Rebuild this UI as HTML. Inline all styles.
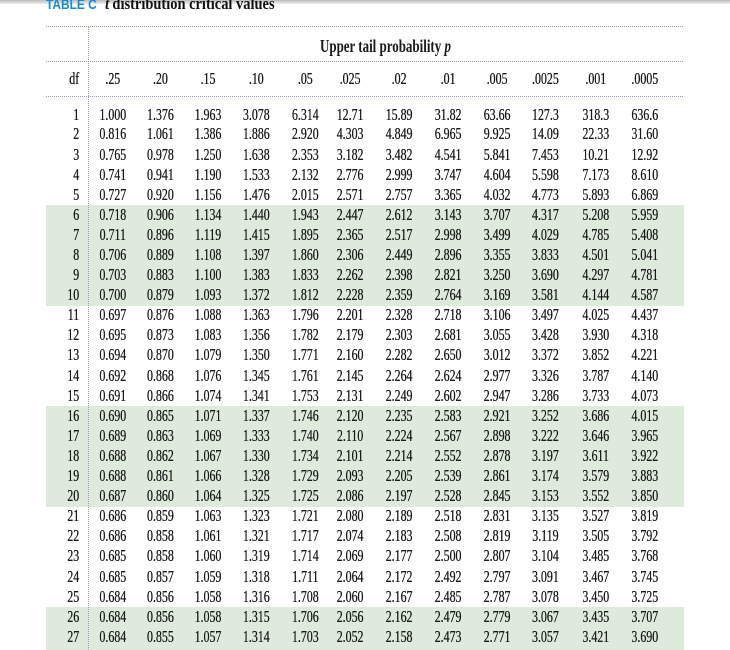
<!DOCTYPE html>
<html><head><style>
body{margin:0;width:730px;height:650px;overflow:hidden;background:#fff;position:relative;font-family:"Liberation Serif",serif;color:#1a1a1a;}
.top{position:absolute;left:0;top:0;width:730px;height:4px;background:linear-gradient(#bbb,#eee);}
.title{position:absolute;left:46px;top:-6px;font-family:"Liberation Sans",sans-serif;font-weight:bold;font-size:14px;color:#1b8bc6;transform:scaleX(0.85);transform-origin:left;white-space:nowrap;}
.title i{font-family:"Liberation Serif",serif;color:#111;font-size:17px;margin-left:6px;}
.title b{font-family:"Liberation Serif",serif;color:#111;font-size:17px;}
.hl{position:absolute;left:46px;width:637px;height:0;border-top:1.5px dotted #9a9ac8;}
.vl{position:absolute;left:88px;top:27px;height:623px;border-left:1.5px dotted #9a9ac8;}
.band{position:absolute;left:46px;width:638px;background:#deebdc;}
.r{position:absolute;left:0;width:1043px;height:20px;transform:scaleX(0.7);transform-origin:0 0;font-size:17px;line-height:20px;text-shadow:0.3px 0 0 #1a1a1a;}
.r span{position:absolute;transform:translateX(-50%);white-space:nowrap;}
.r span:nth-child(1){left:113px;transform:translateX(-100%);}
.r span:nth-child(2){left:161px}.r span:nth-child(3){left:229px}.r span:nth-child(4){left:297px}
.r span:nth-child(5){left:366px}.r span:nth-child(6){left:436px}.r span:nth-child(7){left:500px}
.r span:nth-child(8){left:570px}.r span:nth-child(9){left:640px}.r span:nth-child(10){left:710px}
.r span:nth-child(11){left:779px}.r span:nth-child(12){left:851px}.r span:nth-child(13){left:921px}
.up{position:absolute;left:320px;top:36px;font-size:18px;font-weight:bold;transform:scaleX(0.72);transform-origin:left;white-space:nowrap;}
</style></head><body>
<div class="top"></div>
<div class="title">TABLE C <i>t</i> <b>distribution critical values</b></div>
<div class="band" style="top:205px;height:101px"></div>
<div class="band" style="top:406px;height:101px"></div>
<div class="band" style="top:607px;height:43px"></div>
<div class="hl" style="top:26px"></div>
<div class="hl" style="top:61px"></div>
<div class="hl" style="top:96px"></div>
<div class="vl"></div>
<div class="up">Upper tail probability <i>p</i></div>
<div class="r" style="top:69px"><span>df</span><span>.25</span><span>.20</span><span>.15</span><span>.10</span><span>.05</span><span>.025</span><span>.02</span><span>.01</span><span>.005</span><span>.0025</span><span>.001</span><span>.0005</span></div>
<div class="r" style="top:105px"><span>1</span><span>1.000</span><span>1.376</span><span>1.963</span><span>3.078</span><span>6.314</span><span>12.71</span><span>15.89</span><span>31.82</span><span>63.66</span><span>127.3</span><span>318.3</span><span>636.6</span></div>
<div class="r" style="top:124px"><span>2</span><span>0.816</span><span>1.061</span><span>1.386</span><span>1.886</span><span>2.920</span><span>4.303</span><span>4.849</span><span>6.965</span><span>9.925</span><span>14.09</span><span>22.33</span><span>31.60</span></div>
<div class="r" style="top:145px"><span>3</span><span>0.765</span><span>0.978</span><span>1.250</span><span>1.638</span><span>2.353</span><span>3.182</span><span>3.482</span><span>4.541</span><span>5.841</span><span>7.453</span><span>10.21</span><span>12.92</span></div>
<div class="r" style="top:165px"><span>4</span><span>0.741</span><span>0.941</span><span>1.190</span><span>1.533</span><span>2.132</span><span>2.776</span><span>2.999</span><span>3.747</span><span>4.604</span><span>5.598</span><span>7.173</span><span>8.610</span></div>
<div class="r" style="top:185px"><span>5</span><span>0.727</span><span>0.920</span><span>1.156</span><span>1.476</span><span>2.015</span><span>2.571</span><span>2.757</span><span>3.365</span><span>4.032</span><span>4.773</span><span>5.893</span><span>6.869</span></div>
<div class="r" style="top:205px"><span>6</span><span>0.718</span><span>0.906</span><span>1.134</span><span>1.440</span><span>1.943</span><span>2.447</span><span>2.612</span><span>3.143</span><span>3.707</span><span>4.317</span><span>5.208</span><span>5.959</span></div>
<div class="r" style="top:225px"><span>7</span><span>0.711</span><span>0.896</span><span>1.119</span><span>1.415</span><span>1.895</span><span>2.365</span><span>2.517</span><span>2.998</span><span>3.499</span><span>4.029</span><span>4.785</span><span>5.408</span></div>
<div class="r" style="top:245px"><span>8</span><span>0.706</span><span>0.889</span><span>1.108</span><span>1.397</span><span>1.860</span><span>2.306</span><span>2.449</span><span>2.896</span><span>3.355</span><span>3.833</span><span>4.501</span><span>5.041</span></div>
<div class="r" style="top:265px"><span>9</span><span>0.703</span><span>0.883</span><span>1.100</span><span>1.383</span><span>1.833</span><span>2.262</span><span>2.398</span><span>2.821</span><span>3.250</span><span>3.690</span><span>4.297</span><span>4.781</span></div>
<div class="r" style="top:285px"><span>10</span><span>0.700</span><span>0.879</span><span>1.093</span><span>1.372</span><span>1.812</span><span>2.228</span><span>2.359</span><span>2.764</span><span>3.169</span><span>3.581</span><span>4.144</span><span>4.587</span></div>
<div class="r" style="top:305px"><span>11</span><span>0.697</span><span>0.876</span><span>1.088</span><span>1.363</span><span>1.796</span><span>2.201</span><span>2.328</span><span>2.718</span><span>3.106</span><span>3.497</span><span>4.025</span><span>4.437</span></div>
<div class="r" style="top:325px"><span>12</span><span>0.695</span><span>0.873</span><span>1.083</span><span>1.356</span><span>1.782</span><span>2.179</span><span>2.303</span><span>2.681</span><span>3.055</span><span>3.428</span><span>3.930</span><span>4.318</span></div>
<div class="r" style="top:345px"><span>13</span><span>0.694</span><span>0.870</span><span>1.079</span><span>1.350</span><span>1.771</span><span>2.160</span><span>2.282</span><span>2.650</span><span>3.012</span><span>3.372</span><span>3.852</span><span>4.221</span></div>
<div class="r" style="top:366px"><span>14</span><span>0.692</span><span>0.868</span><span>1.076</span><span>1.345</span><span>1.761</span><span>2.145</span><span>2.264</span><span>2.624</span><span>2.977</span><span>3.326</span><span>3.787</span><span>4.140</span></div>
<div class="r" style="top:386px"><span>15</span><span>0.691</span><span>0.866</span><span>1.074</span><span>1.341</span><span>1.753</span><span>2.131</span><span>2.249</span><span>2.602</span><span>2.947</span><span>3.286</span><span>3.733</span><span>4.073</span></div>
<div class="r" style="top:406px"><span>16</span><span>0.690</span><span>0.865</span><span>1.071</span><span>1.337</span><span>1.746</span><span>2.120</span><span>2.235</span><span>2.583</span><span>2.921</span><span>3.252</span><span>3.686</span><span>4.015</span></div>
<div class="r" style="top:426px"><span>17</span><span>0.689</span><span>0.863</span><span>1.069</span><span>1.333</span><span>1.740</span><span>2.110</span><span>2.224</span><span>2.567</span><span>2.898</span><span>3.222</span><span>3.646</span><span>3.965</span></div>
<div class="r" style="top:446px"><span>18</span><span>0.688</span><span>0.862</span><span>1.067</span><span>1.330</span><span>1.734</span><span>2.101</span><span>2.214</span><span>2.552</span><span>2.878</span><span>3.197</span><span>3.611</span><span>3.922</span></div>
<div class="r" style="top:466px"><span>19</span><span>0.688</span><span>0.861</span><span>1.066</span><span>1.328</span><span>1.729</span><span>2.093</span><span>2.205</span><span>2.539</span><span>2.861</span><span>3.174</span><span>3.579</span><span>3.883</span></div>
<div class="r" style="top:486px"><span>20</span><span>0.687</span><span>0.860</span><span>1.064</span><span>1.325</span><span>1.725</span><span>2.086</span><span>2.197</span><span>2.528</span><span>2.845</span><span>3.153</span><span>3.552</span><span>3.850</span></div>
<div class="r" style="top:506px"><span>21</span><span>0.686</span><span>0.859</span><span>1.063</span><span>1.323</span><span>1.721</span><span>2.080</span><span>2.189</span><span>2.518</span><span>2.831</span><span>3.135</span><span>3.527</span><span>3.819</span></div>
<div class="r" style="top:526px"><span>22</span><span>0.686</span><span>0.858</span><span>1.061</span><span>1.321</span><span>1.717</span><span>2.074</span><span>2.183</span><span>2.508</span><span>2.819</span><span>3.119</span><span>3.505</span><span>3.792</span></div>
<div class="r" style="top:546px"><span>23</span><span>0.685</span><span>0.858</span><span>1.060</span><span>1.319</span><span>1.714</span><span>2.069</span><span>2.177</span><span>2.500</span><span>2.807</span><span>3.104</span><span>3.485</span><span>3.768</span></div>
<div class="r" style="top:567px"><span>24</span><span>0.685</span><span>0.857</span><span>1.059</span><span>1.318</span><span>1.711</span><span>2.064</span><span>2.172</span><span>2.492</span><span>2.797</span><span>3.091</span><span>3.467</span><span>3.745</span></div>
<div class="r" style="top:587px"><span>25</span><span>0.684</span><span>0.856</span><span>1.058</span><span>1.316</span><span>1.708</span><span>2.060</span><span>2.167</span><span>2.485</span><span>2.787</span><span>3.078</span><span>3.450</span><span>3.725</span></div>
<div class="r" style="top:607px"><span>26</span><span>0.684</span><span>0.856</span><span>1.058</span><span>1.315</span><span>1.706</span><span>2.056</span><span>2.162</span><span>2.479</span><span>2.779</span><span>3.067</span><span>3.435</span><span>3.707</span></div>
<div class="r" style="top:627px"><span>27</span><span>0.684</span><span>0.855</span><span>1.057</span><span>1.314</span><span>1.703</span><span>2.052</span><span>2.158</span><span>2.473</span><span>2.771</span><span>3.057</span><span>3.421</span><span>3.690</span></div>
</body></html>
